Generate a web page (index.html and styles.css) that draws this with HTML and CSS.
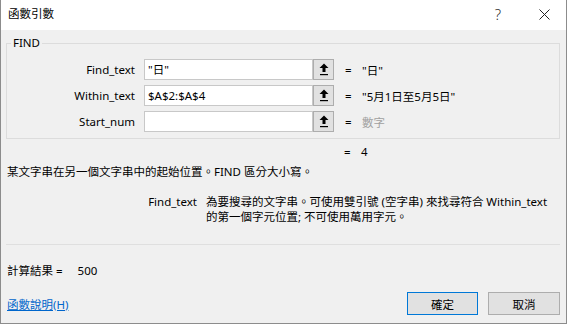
FILE: index.html
```html
<!DOCTYPE html>
<html lang="zh-Hant">
<head>
    <meta charset="UTF-8">
    <title>函數引數</title>
    <link rel="stylesheet" href="styles.css">
</head>
<body>
    <div class="dialog">
        <div class="titlebar">
            <span class="title">函數引數</span>
            <span class="help">?</span>
            <span class="close">
                <svg width="11" height="11" viewBox="0 0 11 11"><path d="M0.5 0.5L10.5 10.5M10.5 0.5L0.5 10.5" stroke="#222" stroke-width="1"/></svg>
            </span>
        </div>

        <div class="content">
            <fieldset class="args">
                <legend>FIND</legend>

                <div class="arg-row">
                    <label class="arg-name">Find_text</label>
                    <div class="arg-input">"日"</div>
                    <button class="collapse">
                        <svg width="10" height="13" viewBox="0 0 10 13"><path d="M5 0.5L9.5 5H6.5V9H3.5V5H0.5Z" fill="#000"/><rect x="1" y="11" width="8" height="1.2" fill="#000"/></svg>
                    </button>
                    <span class="eq">=</span>
                    <span class="arg-value">"日"</span>
                </div>

                <div class="arg-row">
                    <label class="arg-name">Within_text</label>
                    <div class="arg-input">$A$2:$A$4</div>
                    <button class="collapse">
                        <svg width="10" height="13" viewBox="0 0 10 13"><path d="M5 0.5L9.5 5H6.5V9H3.5V5H0.5Z" fill="#000"/><rect x="1" y="11" width="8" height="1.2" fill="#000"/></svg>
                    </button>
                    <span class="eq">=</span>
                    <span class="arg-value">"5月1日至5月5日"</span>
                </div>

                <div class="arg-row">
                    <label class="arg-name">Start_num</label>
                    <div class="arg-input"></div>
                    <button class="collapse">
                        <svg width="10" height="13" viewBox="0 0 10 13"><path d="M5 0.5L9.5 5H6.5V9H3.5V5H0.5Z" fill="#000"/><rect x="1" y="11" width="8" height="1.2" fill="#000"/></svg>
                    </button>
                    <span class="eq">=</span>
                    <span class="arg-value hint">數字</span>
                </div>
            </fieldset>

            <div class="func-value"><span class="eq">=</span><span>4</span></div>

            <p class="desc">某文字串在另一個文字串中的起始位置。FIND 區分大小寫。</p>

            <div class="arg-help">
                <span class="help-name">Find_text</span>
                <span class="help-text">為要搜尋的文字串。可使用雙引號 (空字串) 來找尋符合 Within_text<br>的第一個字元位置; 不可使用萬用字元。</span>
            </div>

            <div class="divider"></div>

            <div class="formula-result">計算結果 =<span class="result-num">500</span></div>

            <div class="footer">
                <a href="#" class="help-link">函數說明(H)</a>
                <div class="actions">
                    <button class="btn default">確定</button>
                    <button class="btn">取消</button>
                </div>
            </div>
        </div>
    </div>
</body>
</html>
```

FILE: styles.css
```css
html, body {
    margin: 0;
    background: #f0f0f0;
}
body {
    font-family: "Segoe UI", "Noto Sans", "Noto Sans CJK TC", sans-serif;
    font-size: 11.5px;
    color: #000;
}
.dialog {
    width: 567px;
    height: 324px;
    box-sizing: border-box;
    border: 1px solid #8c8c8c;
    border-top: none;
    background: #f0f0f0;
    display: flex;
    flex-direction: column;
}
.titlebar {
    height: 30px;
    background: #fff;
    display: flex;
    align-items: center;
    padding-left: 7px;
}
.title {
    flex: 1;
    line-height: 14px;
    margin-top: -2px;
}
.help {
    font-size: 15px;
    color: #333;
    font-weight: 300;
    margin-right: 38px;
    margin-top: -2px;
}
.close {
    display: flex;
    margin-right: 16px;
    margin-top: -1px;
}
.content {
    flex: 1;
    padding: 0 6px 0 5px;
    display: flex;
    flex-direction: column;
}
.args {
    margin: 6px 0 0;
    padding: 9px 0 6px 0;
    border: 1px solid #dcdcdc;
    min-width: 0;
}
.args legend {
    padding: 0 2px;
    margin-left: 4px;
    line-height: 14px;
}
.arg-row {
    display: flex;
    align-items: center;
    height: 21px;
    margin-bottom: 5px;
}
.arg-row:last-child {
    margin-bottom: 0;
}
.arg-name {
    width: 128px;
    text-align: right;
    margin-right: 9px;
}
.arg-input {
    width: 169px;
    height: 21px;
    box-sizing: border-box;
    background: #fff;
    border: 1px solid #c8c8c8;
    padding-left: 3px;
    line-height: 19px;
}
.collapse {
    width: 21px;
    height: 21px;
    box-sizing: border-box;
    padding: 0;
    border: 1px solid #adadad;
    background: #e1e1e1;
    display: flex;
    align-items: center;
    justify-content: center;
}
.eq {
    width: 17px;
    margin-left: 11px;
}
.hint {
    color: #a0a0a0;
}
.func-value {
    display: flex;
    line-height: 14px;
    margin-top: 6px;
    padding-left: 327px;
}
.desc {
    margin: 6px 0 0;
    line-height: 14px;
    padding-left: 1px;
}
.arg-help {
    display: grid;
    grid-template-columns: 191px auto;
    column-gap: 9px;
    margin-top: 15px;
    line-height: 15px;
}
.help-name {
    text-align: right;
}
.divider {
    height: 1px;
    background: #dfdfdf;
    margin-top: 20px;
}
.formula-result {
    margin-top: 19px;
    line-height: 14px;
    padding-left: 1px;
}
.result-num {
    margin-left: 15px;
}
.footer {
    display: flex;
    align-items: center;
    justify-content: space-between;
    margin-top: 14px;
}
.help-link {
    color: #0066cc;
    padding-left: 1px;
}
.actions {
    display: flex;
    gap: 10px;
}
.btn {
    width: 72px;
    height: 23px;
    box-sizing: border-box;
    font: inherit;
    background: #e1e1e1;
    border: 1px solid #adadad;
    padding: 0;
}
.btn.default {
    width: 71px;
    border-color: #0078d7;
}
```
